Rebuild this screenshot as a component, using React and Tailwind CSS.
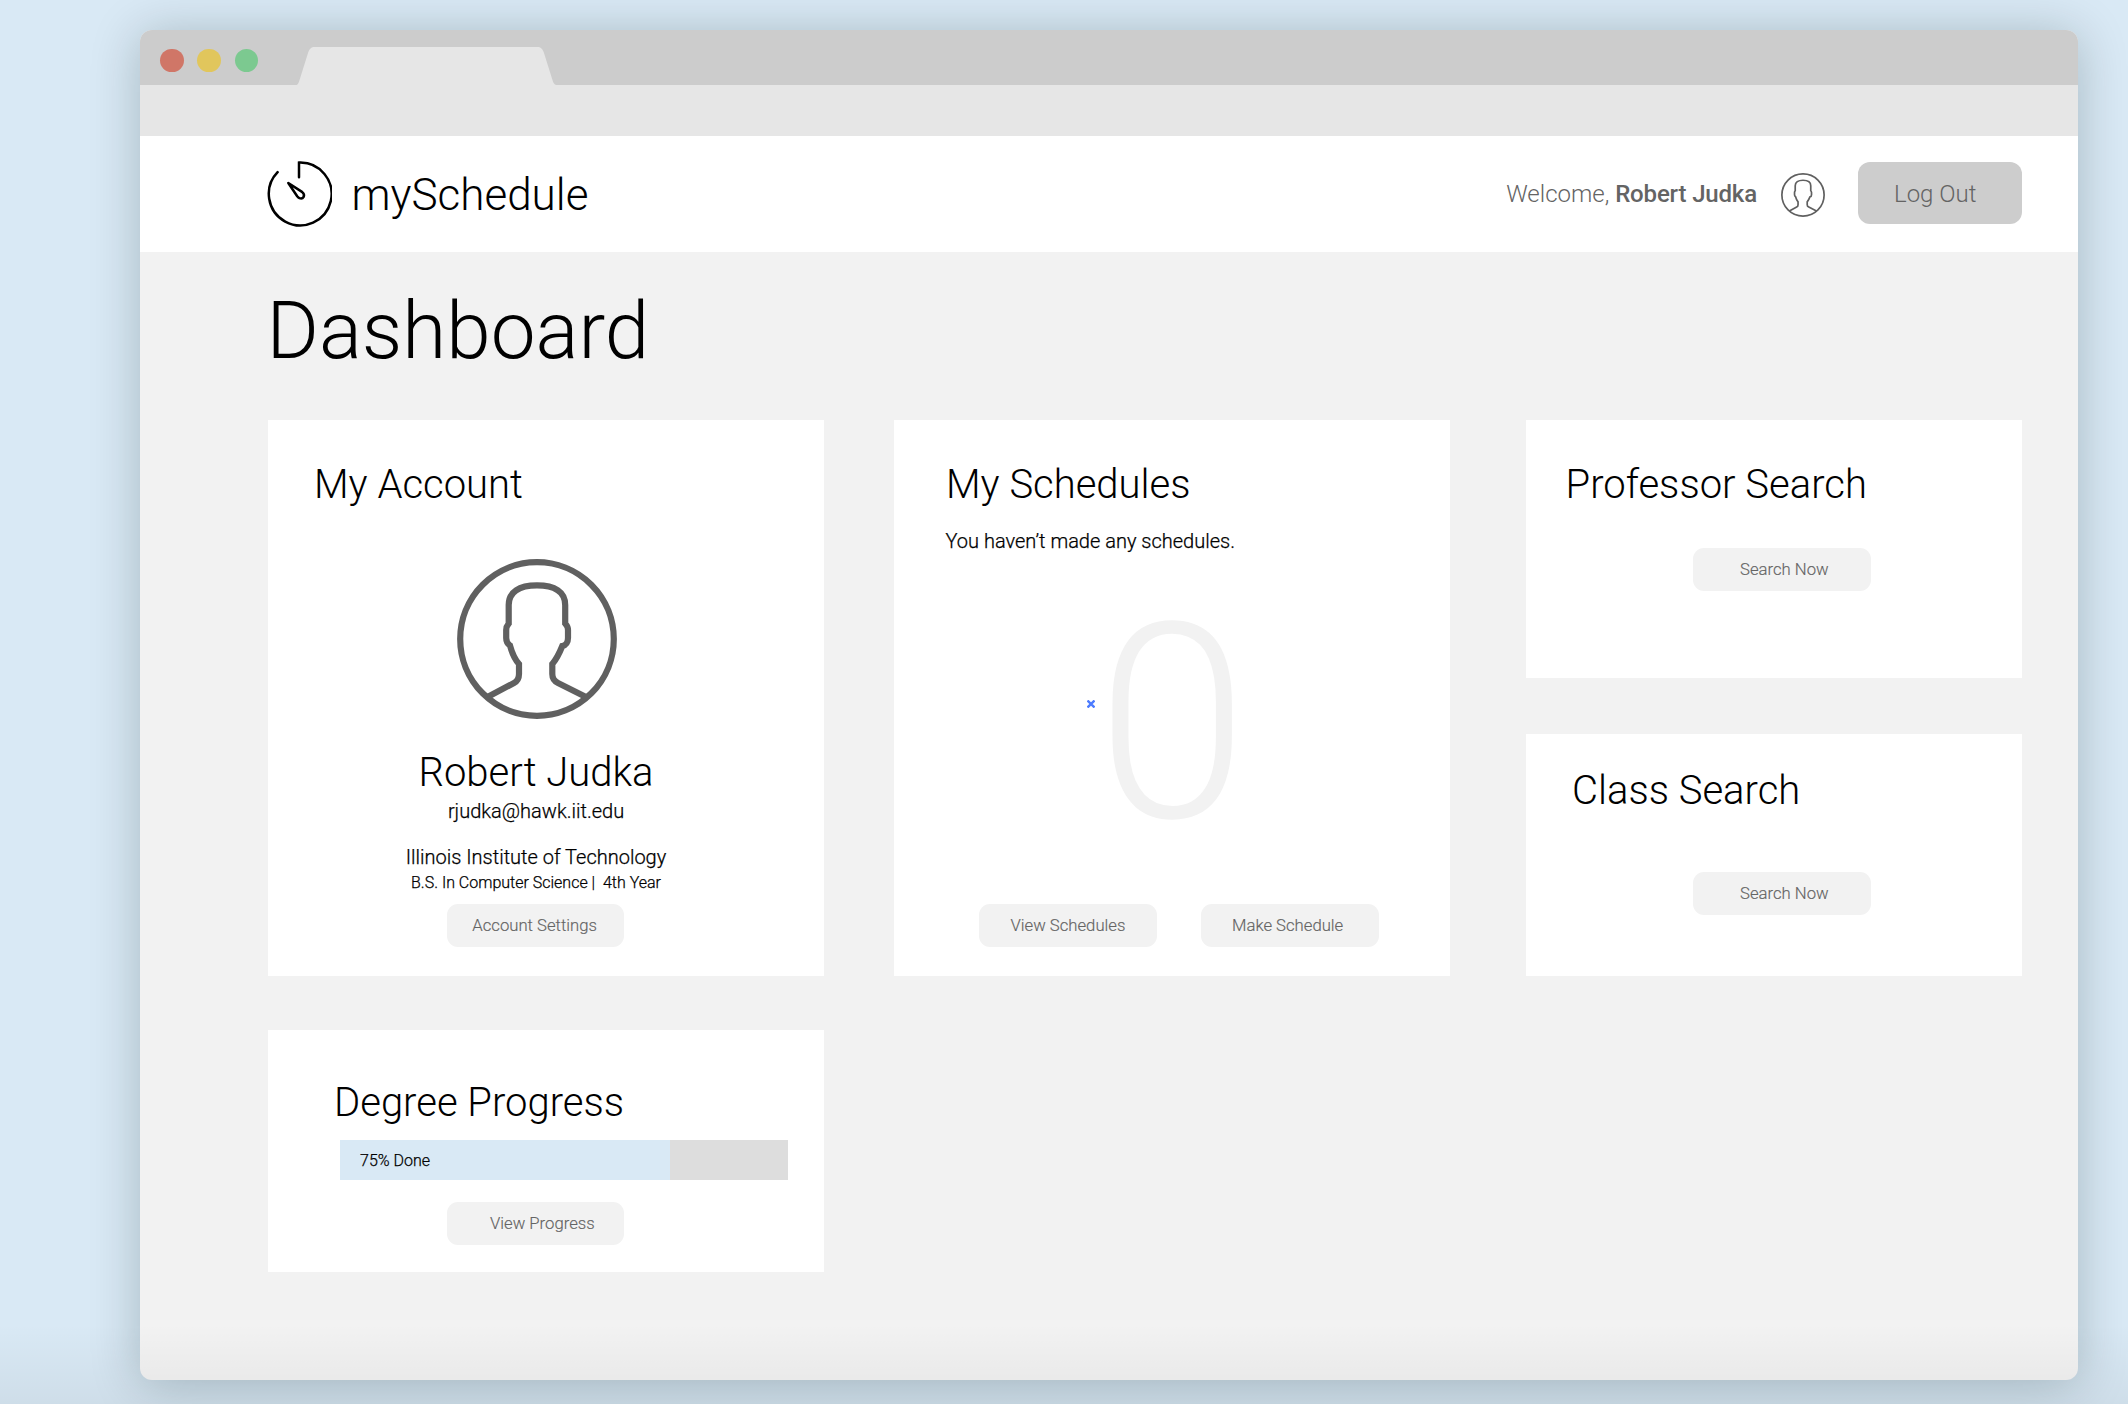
import React from "react";

function LogoMark() {
  return (
    <svg
      className="h-[66px] w-[66px]"
      viewBox="0 0 66 66"
      fill="none"
      stroke="#000"
      strokeWidth="2.5"
      strokeLinecap="round"
    >
      <path d="M33 16.2V1.6A31.4 31.4 0 1 1 11.6 11.2" />
      <path
        d="M22.3 22L36 30.9C40 34.2 37.2 38.6 33.4 37.2C32.6 36.9 31.8 36 31.2 35.2Z"
        strokeLinejoin="round"
      />
    </svg>
  );
}

function Avatar({ className }) {
  return (
    <svg
      className={className}
      viewBox="0 0 160 160"
      fill="none"
      stroke="#606060"
      strokeWidth="6.2"
    >
      <circle cx="80" cy="80" r="76.8" />
      <path d="M30.5 138L57 124C61 121.8 62 119 62 115V105C58.5 101 55 94 53 86.5C50 84.5 49.2 82.5 49.2 79V71C49.2 68.5 50 66.5 51.7 64.5V46C51.7 33 62 26.4 80 26.4S108.2 33 108.2 46V64.5C110 66.5 111 68.5 111 71V79C111 83 109 86.3 105.3 87C102.5 94 99.5 100 95.3 105V115C95.3 119 97 122 101 124L129 138" />
    </svg>
  );
}

function Button({ className, children }) {
  return (
    <button
      className={`flex h-[43px] items-start rounded-[11px] bg-[#f2f2f2] pt-[12.5px] text-left text-[16.7px] leading-5 whitespace-nowrap text-[#646464] [-webkit-text-stroke:0.15px] ${className}`}
    >
      {children}
    </button>
  );
}

function Heading({ className, children }) {
  return (
    <h2 className={`text-[40px] leading-[47px] font-light whitespace-nowrap ${className}`}>
      {children}
    </h2>
  );
}

function Text({ className, children }) {
  return <p className={`whitespace-pre [-webkit-text-stroke:0.25px] ${className}`}>{children}</p>;
}

function TitleBar() {
  return (
    <div className="flex h-[55px] bg-[#cccccc] pl-5">
      <div className="mt-[18.5px] flex gap-[13.8px]">
        <span className="h-[23.5px] w-[23.5px] rounded-full bg-[#d07667]" />
        <span className="h-[23.5px] w-[23.5px] rounded-full bg-[#e1c65c]" />
        <span className="h-[23.5px] w-[23.5px] rounded-full bg-[#7cc990]" />
      </div>
      <svg className="mt-[16.5px] ml-[36px] h-[38.5px] w-[266px]" viewBox="0 0 266 38.5">
        <path
          d="M0 38.5C3 38.5 4.2 37 5 34.8L14 6C15.5 1.8 17 0 21 0H243C247 0 248.5 1.8 250 6L259 34.8C260 37 261.5 38.5 265 38.5Z"
          fill="#e6e6e6"
        />
      </svg>
    </div>
  );
}

function Header() {
  return (
    <header className="flex h-[116px] items-center bg-white pr-14 pl-[126px]">
      <LogoMark />
      <span className="mt-0.5 ml-[19.5px] text-[44px] leading-[52px]">mySchedule</span>
      <p className="ml-auto text-2xl leading-7 text-[#646464]">
        Welcome, <span className="font-medium tracking-[-0.16px]">Robert Judka</span>
      </p>
      <Avatar className="mt-0.5 mr-[33px] ml-6 h-11 w-11" />
      <button className="mb-0.5 flex h-[62px] w-[164px] items-start rounded-xl bg-[#cdcdcd] pt-[18px] pl-9 text-2xl leading-7 text-[#646464]">
        Log Out
      </button>
    </header>
  );
}

function AccountCard() {
  return (
    <section className="h-[556px] bg-white pt-[41px]">
      <Heading className="pl-[46px]">My Account</Heading>
      <div className="mt-[51px] flex flex-col items-center pr-[18px] text-center">
        <Avatar className="h-40 w-40" />
        <Heading className="mt-[30px] mr-[2px]">Robert Judka</Heading>
        <Text className="mt-[3px] mr-[2px] text-xl leading-6">rjudka@hawk.iit.edu</Text>
        <Text className="mt-[22px] mr-[2px] text-xl leading-6">
          Illinois Institute of Technology
        </Text>
        <Text className="mt-1 mr-[2px] text-base leading-[19px]">
          {"B.S. In Computer Science |  4th Year"}
        </Text>
        <Button className="mt-[11.5px] mr-[3px] w-[177.5px] pl-[25.5px]">Account Settings</Button>
      </div>
    </section>
  );
}

function SchedulesCard() {
  return (
    <section className="relative h-[556px] w-[556px] bg-white pt-[41px]">
      <Heading className="pl-[52px]">My Schedules</Heading>
      <Text className="mt-[21px] pl-[51.5px] text-xl leading-6">
        You haven’t made any schedules.
      </Text>
      <p className="mt-[11px] pl-[202.5px] text-[273px] leading-[321px] text-[#f2f2f2]">0</p>
      <svg
        className="absolute top-[280px] left-[193px] h-2 w-2"
        viewBox="0 0 8 8"
        stroke="#4d7cff"
        strokeWidth="2.4"
      >
        <path d="M0.5 0.5L7.5 7.5M7.5 0.5L0.5 7.5" />
      </svg>
      <div className="mt-[18.5px] flex gap-11 pl-[84.5px]">
        <Button className="w-[178px] pl-8">View Schedules</Button>
        <Button className="w-[178px] pl-[31.5px]">Make Schedule</Button>
      </div>
    </section>
  );
}

function DegreeCard() {
  return (
    <section className="mt-[54px] h-[242px] bg-white pt-[49px]">
      <Heading className="pl-[66px]">Degree Progress</Heading>
      <div className="mt-[13.5px] ml-[71.5px] h-[40.5px] w-[448.5px] bg-[#dddddd]">
        <div className="h-full w-[330.5px] bg-[#d9e9f5] pt-[11.5px]">
          <Text className="pl-[20.5px] text-base leading-[19px]">75% Done</Text>
        </div>
      </div>
      <Button className="mt-[21.5px] ml-[178.5px] w-[177.5px] pl-[43.5px]">View Progress</Button>
    </section>
  );
}

export default function App() {
  return (
    <div className="relative h-[1404px] w-[2128px] overflow-hidden bg-[#d9e9f5] pt-[30px] pl-[140px] font-['Roboto',sans-serif] font-light text-black">
      <div className="h-[1350px] w-[1938px] overflow-hidden rounded-xl bg-[#f2f2f2] shadow-[0_4px_50px_rgba(0,30,30,0.24)]">
        <TitleBar />
        <div className="h-[51px] bg-[#e6e6e6]" />
        <Header />
        <main className="pt-8">
          <h1 className="pl-[126.5px] text-[80px] leading-[94px]">Dashboard</h1>
          <div className="mt-[42px] flex items-start pl-32">
            <div className="w-[556px]">
              <AccountCard />
              <DegreeCard />
            </div>
            <div className="ml-[70px]">
              <SchedulesCard />
            </div>
            <div className="ml-[76px] w-[496px]">
              <section className="h-[258px] bg-white pt-[41px]">
                <Heading className="pl-[39.5px]">Professor Search</Heading>
                <Button className="mt-[39.5px] ml-[166.5px] w-[178px] pl-[47.5px]">
                  Search Now
                </Button>
              </section>
              <section className="mt-14 h-[242px] bg-white pt-[33px]">
                <Heading className="pl-[46px]">Class Search</Heading>
                <Button className="mt-[57.5px] ml-[166.5px] w-[178px] pl-[47.5px]">
                  Search Now
                </Button>
              </section>
            </div>
          </div>
        </main>
      </div>
      <div className="pointer-events-none absolute inset-x-0 bottom-0 h-[80px] bg-linear-to-b from-transparent to-black/5" />
    </div>
  );
}
